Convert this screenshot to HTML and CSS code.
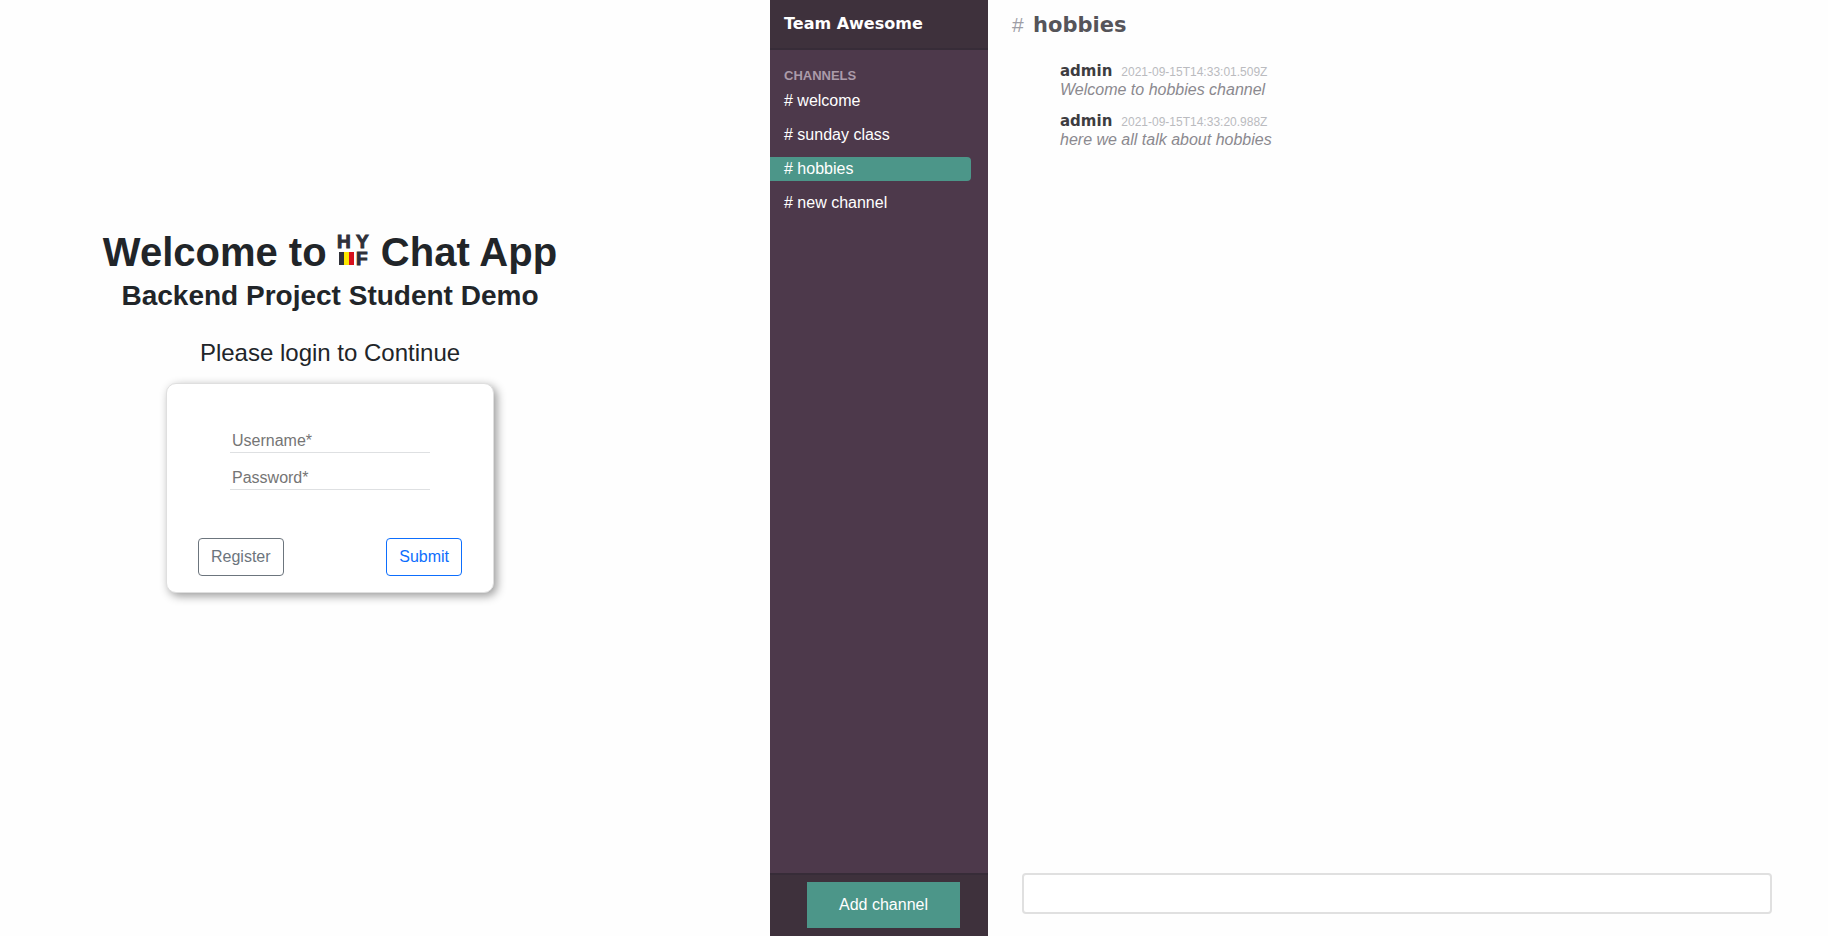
FILE: index.html
```
<!DOCTYPE html>
<html lang="en">
<head>
<meta charset="utf-8">
<title>HYF Chat App</title>
<link rel="stylesheet" href="styles.css">
</head>
<body>
<div class="page">
  <section class="login">
    <h1 class="login-title">Welcome to
      <svg class="logo" viewBox="0 0 32 32" role="img" aria-label="HYF">
        <text class="logo-text" x="-1" y="14">H</text>
        <text class="logo-text" x="18" y="14">Y</text>
        <text class="logo-text" x="18" y="31">F</text>
        <rect x="1" y="18" width="5" height="13" fill="#2f313a"/>
        <rect x="6" y="18" width="5" height="13" fill="#fbe700"/>
        <rect x="11" y="18" width="5" height="13" fill="#d8101c"/>
      </svg>
      Chat App</h1>
    <h2 class="login-subtitle">Backend Project Student Demo</h2>
    <p class="login-prompt">Please login to Continue</p>
    <form class="card">
      <input class="field" type="text" placeholder="Username*" aria-label="Username">
      <input class="field" type="password" placeholder="Password*" aria-label="Password">
      <div class="card-actions">
        <button class="btn btn-secondary" type="button">Register</button>
        <button class="btn btn-primary" type="submit">Submit</button>
      </div>
    </form>
  </section>

  <aside class="sidebar">
    <header class="team">Team Awesome</header>
    <nav class="channels">
      <h2 class="channels-title">Channels</h2>
      <ul class="channel-list">
        <li><a class="channel" href="#welcome"># welcome</a></li>
        <li><a class="channel" href="#sunday"># sunday class</a></li>
        <li><a class="channel channel-active" href="#hobbies"># hobbies</a></li>
        <li><a class="channel" href="#new"># new channel</a></li>
      </ul>
    </nav>
    <footer class="sidebar-footer">
      <button class="add-channel" type="button">Add channel</button>
    </footer>
  </aside>

  <main class="chat">
    <h2 class="chat-title"><span class="hash">#</span> hobbies</h2>
    <div class="messages">
      <article class="message">
        <div class="message-head"><span class="author">admin</span><time class="stamp">2021-09-15T14:33:01.509Z</time></div>
        <p class="message-text">Welcome to hobbies channel</p>
      </article>
      <article class="message">
        <div class="message-head"><span class="author">admin</span><time class="stamp">2021-09-15T14:33:20.988Z</time></div>
        <p class="message-text">here we all talk about hobbies</p>
      </article>
    </div>
    <input class="composer" type="text" aria-label="Message">
  </main>
</div>
</body>
</html>
```
FILE: styles.css
```
* { box-sizing: border-box; }
body, h1, h2, p, ul { margin: 0; padding: 0; }
body {
  background: #fefefe;
  color: #212529;
  font-family: "Liberation Sans", Arial, sans-serif;
  font-size: 16px;
}
button, input { font: inherit; }
.page {
  display: grid;
  grid-template-columns: minmax(0, 11fr) 218px minmax(0, 12fr);
  min-height: 100vh;
}

.login {
  display: flex;
  flex-direction: column;
  align-items: center;
  padding: 228px 110px 0 0;
}
.login-title { font-size: 40px; line-height: 48px; white-space: nowrap; }
.logo { width: 32px; height: 32px; overflow: visible; }
.logo-text { font-size: 19px; font-weight: 900; line-height: 1; fill: #2f313a; stroke: #2f313a; stroke-width: 1px; }
.login-subtitle { margin-top: 2px; font-size: 28px; line-height: 36px; }
.login-prompt { font-size: 24px; line-height: 28px; margin-top: 25px; }
.card {
  display: flex;
  flex-direction: column;
  align-items: center;
  gap: 10px;
  width: 328px;
  margin-top: 16px;
  padding: 42px 31px 16px;
  border: 1px solid #dfdfdf;
  border-radius: 10px;
  background: #fff;
  box-shadow: 3px 3px 10px #999;
}
.field {
  width: 200px;
  height: 27px;
  padding: 4px 2px 0;
  border: 0;
  border-bottom: 1px solid #dee0e2;
  background: transparent;
}
.field::placeholder { color: #757575; }
.card-actions {
  display: flex;
  justify-content: space-between;
  align-self: stretch;
  margin-top: 38px;
}
.btn {
  height: 38px;
  padding: 0 12px;
  border: 1px solid currentColor;
  border-radius: 4px;
  background: transparent;
}
.btn-secondary { color: #6c757d; }
.btn-primary { color: #0d6efd; }

.sidebar {
  display: flex;
  flex-direction: column;
  background: #4d394b;
  color: #fff;
}
.team, .author, .chat-title { font-family: "DejaVu Sans", "Liberation Sans", sans-serif; font-weight: 900; }
.team {
  height: 50px;
  padding-left: 14px;
  border-bottom: 2px solid #372c38;
  background: #3e313c;
  line-height: 48px;
}
.channels { flex: 1; padding: 18px 17px 0 0; }
.channels-title {
  padding-left: 14px;
  color: #ab9ba9;
  font-size: 13px;
  line-height: 16px;
  text-transform: uppercase;
}
.channel-list {
  display: grid;
  gap: 10px;
  margin-top: 5px;
  list-style: none;
}
.channel {
  display: block;
  padding-left: 14px;
  border-radius: 0 4px 4px 0;
  color: #fff;
  line-height: 24px;
  text-decoration: none;
}
.channel-active { background: #4c9689; }
.sidebar-footer {
  padding: 7px 28px 8px 37px;
  border-top: 2px solid #372c38;
  background: #3e313c;
}
.add-channel {
  width: 100%;
  height: 46px;
  border: 0;
  background: #4c9689;
  color: #fff;
}

.chat { display: flex; flex-direction: column; padding: 11px 56px 22px 24px; }
.chat-title { color: #555459; font-size: 21px; line-height: 28px; }
.hash { margin-right: 2px; color: #9e9ea6; font-family: "Liberation Sans", sans-serif; font-weight: 400; }
.messages { flex: 1; padding: 22px 0 0 48px; }
.message { margin-bottom: 12px; }
.message-head { display: flex; align-items: baseline; gap: 9px; line-height: 20px; }
.author { color: #3d3c40; font-size: 15px; }
.stamp { color: #babbbf; font-size: 12px; line-height: 16px; }
.message-text { color: #8b898f; font-style: italic; line-height: 18px; }
.composer {
  height: 41px;
  margin-left: 10px;
  padding: 0 12px;
  border: 2px solid #e0e0e0;
  border-radius: 4px;
  background: #fff;
}
```
